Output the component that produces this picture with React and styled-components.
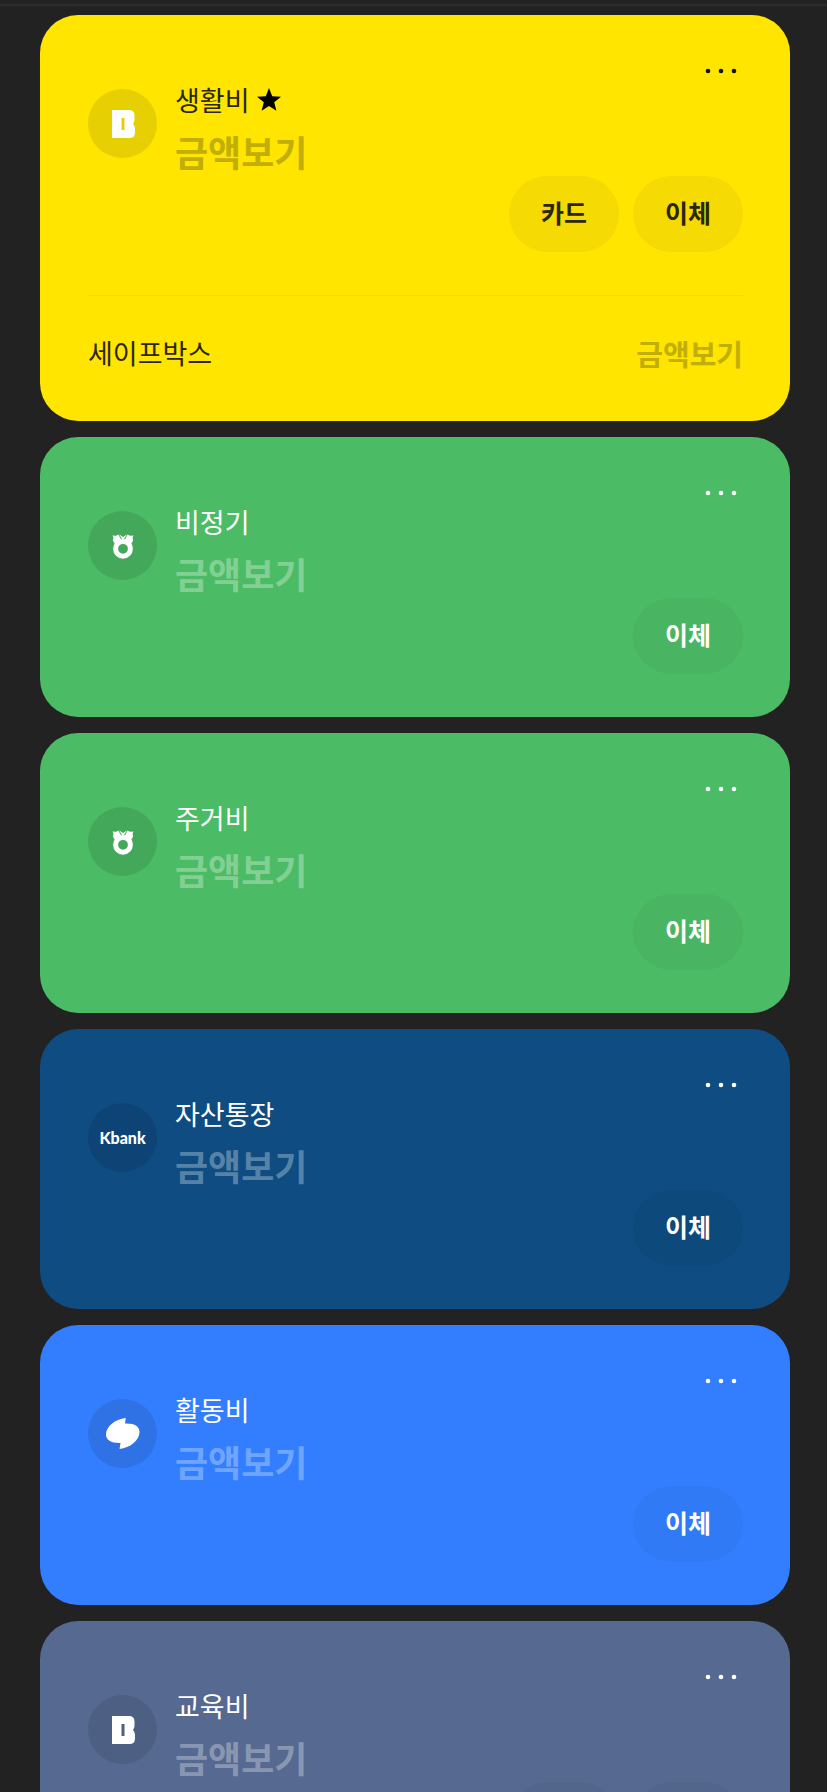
import React from "react";
import styled, { createGlobalStyle } from "styled-components";

const GlobalStyle = createGlobalStyle`
  * {
    box-sizing: border-box;
  }
  body {
    margin: 0;
    background: #222222;
    font-family: "Noto Sans CJK KR", "Noto Sans", sans-serif;
  }
  button {
    font-family: inherit;
    border: none;
    padding: 0;
    cursor: pointer;
  }
`;

const Screen = styled.div`
  height: 100vh;
  overflow-y: auto;
  scrollbar-width: none;
`;

const TopLine = styled.div`
  height: 6px;
  border-bottom: 2px solid #302c2c;
`;

const AccountList = styled.main`
  display: flex;
  flex-direction: column;
  gap: 16px;
  padding: 9px 37px 16px 40px;
`;

const Card = styled.section`
  display: flex;
  flex-direction: column;
  padding: 44px 47px 43px 48px;
  border-radius: 38px;
  background: ${props => props.$bg};
  color: ${props => props.$color};
`;

const MenuButton = styled.button`
  align-self: flex-end;
  display: flex;
  justify-content: center;
  align-items: center;
  width: 44px;
  height: 24px;
  background: none;
  color: ${props => props.$color};
`;

const Info = styled.div`
  display: flex;
  gap: 18px;
`;

const BankIcon = styled.div`
  display: flex;
  flex-shrink: 0;
  justify-content: center;
  align-items: center;
  width: 69px;
  height: 69px;
  margin-top: 6px;
  border-radius: 50%;
  background: ${props => props.$bg};
  color: #fff;
`;

const BankName = styled.span`
  font-family: Lato, sans-serif;
  font-size: 16px;
  font-weight: 900;
`;

const Name = styled.h2`
  display: flex;
  align-items: center;
  gap: 6px;
  margin: 0 0 11px;
  font-size: 27px;
  font-weight: 400;
  line-height: 34px;
`;

const Amount = styled.button`
  display: block;
  padding-bottom: 2px;
  background: none;
  color: ${props => props.$color};
  font-size: ${props => (props.$small ? "29px" : "36px")};
  font-weight: 700;
  line-height: 46px;
`;

const Actions = styled.div`
  display: flex;
  justify-content: flex-end;
  gap: 14px;
`;

const ActionButton = styled.button`
  width: 110px;
  height: 76px;
  padding-bottom: 4px;
  border-radius: 38px;
  background: ${props => props.$bg};
  color: inherit;
  font-size: 25px;
  font-weight: 700;
`;

const SafeBox = styled.div`
  display: flex;
  justify-content: space-between;
  margin-top: 43px;
  padding-top: 34px;
  border-top: 1px solid #f6d903;
  font-size: 27px;
  line-height: 46px;
`;

function DotsIcon() {
  return (
    <svg width="32" height="6" viewBox="0 0 32 6" fill="currentColor">
      <circle cx="3" cy="3" r="2.3" />
      <circle cx="16" cy="3" r="2.3" />
      <circle cx="29" cy="3" r="2.3" />
    </svg>
  );
}

function StarIcon() {
  return (
    <svg width="26" height="26" viewBox="0 0 26 26" fill="#000">
      <path d="M13 1l3.2 8.2 8.8.5-6.8 5.5 2.2 8.6L13 19l-7.4 4.8 2.2-8.6L1 9.7l8.8-.5z" />
    </svg>
  );
}

function KakaoIcon() {
  return (
    <svg width="24" height="28" viewBox="0 0 24 28">
      <path
        fill="currentColor"
        fillRule="evenodd"
        d="M1 0h17q5.500 0 5.500 5.500v4q0 2.500-1.500 4.500 2 2 2 4.500v4q0 5.500-5.500 5.500H1zM10.500 8v12h3V8z"
      />
    </svg>
  );
}

function NonghyupIcon() {
  return (
    <svg width="22" height="26" viewBox="0 0 22 26">
      <circle cx="11" cy="15.800" r="7.400" fill="none" stroke="currentColor" strokeWidth="5" />
      <path
        fill="currentColor"
        d="M.600 2.200Q4 3.600 6.400 1.600L10.600 9.400 4 13 1 7.800Q2 5 .600 2.200zM21.400 2.200Q18 3.600 15.600 1.600L11.400 9.400 18 13 21 7.800Q20 5 21.400 2.200z"
      />
      <path fill="currentColor" d="M7.300 1.600L11 4l3.700-2.400L11 8z" />
    </svg>
  );
}

function ShinhyupIcon() {
  return (
    <svg width="34" height="32" viewBox="0 0 34 32" fill="currentColor">
      <path d="M19.800 0C9 1 0 8.500 0 16.500c0 5.500 5 8.700 14.500 8.500L13.500 31C24 30 33.500 22.500 33.500 14 33.500 8.500 29 5.200 19 5.500z" />
    </svg>
  );
}

const accounts = [
  {
    name: "생활비",
    star: true,
    icon: <KakaoIcon />,
    bg: "#ffe500",
    color: "#2b2700",
    dots: "#111",
    iconBg: "#e6cf02",
    amountColor: "#c2ae08",
    buttonBg: "#f5da03",
    actions: ["카드", "이체"],
    safeBox: "세이프박스"
  },
  {
    name: "비정기",
    icon: <NonghyupIcon />,
    bg: "#4cbb65",
    iconBg: "#43a85a",
    amountColor: "#82d094",
    buttonBg: "#49b461",
    actions: ["이체"]
  },
  {
    name: "주거비",
    icon: <NonghyupIcon />,
    bg: "#4cbb65",
    iconBg: "#43a85a",
    amountColor: "#82d094",
    buttonBg: "#49b461",
    actions: ["이체"]
  },
  {
    name: "자산통장",
    icon: <BankName>Kbank</BankName>,
    bg: "#0f4c81",
    iconBg: "#0e4475",
    amountColor: "#5782a8",
    buttonBg: "#0e497c",
    actions: ["이체"]
  },
  {
    name: "활동비",
    icon: <ShinhyupIcon />,
    bg: "#337eff",
    iconBg: "#2e72e5",
    amountColor: "#70a5ff",
    buttonBg: "#317af5",
    actions: ["이체"]
  },
  {
    name: "교육비",
    icon: <KakaoIcon />,
    bg: "#566991",
    iconBg: "#4d5f83",
    amountColor: "#8996b2",
    buttonBg: "#52658b",
    actions: ["카드", "이체"]
  }
];

function AccountCard({ account }) {
  const color = account.color || "#fff";

  return (
    <Card $bg={account.bg} $color={color}>
      <MenuButton $color={account.dots || "#fff"} aria-label="더보기">
        <DotsIcon />
      </MenuButton>
      <Info>
        <BankIcon $bg={account.iconBg}>{account.icon}</BankIcon>
        <div>
          <Name>
            {account.name}
            {account.star && <StarIcon />}
          </Name>
          <Amount $color={account.amountColor}>금액보기</Amount>
        </div>
      </Info>
      <Actions>
        {account.actions.map(action => (
          <ActionButton key={action} $bg={account.buttonBg}>
            {action}
          </ActionButton>
        ))}
      </Actions>
      {account.safeBox && (
        <SafeBox>
          <span>{account.safeBox}</span>
          <Amount $small $color={account.amountColor}>
            금액보기
          </Amount>
        </SafeBox>
      )}
    </Card>
  );
}

export default function App() {
  return (
    <Screen>
      <GlobalStyle />
      <TopLine />
      <AccountList>
        {accounts.map(account => (
          <AccountCard key={account.name} account={account} />
        ))}
      </AccountList>
    </Screen>
  );
}
